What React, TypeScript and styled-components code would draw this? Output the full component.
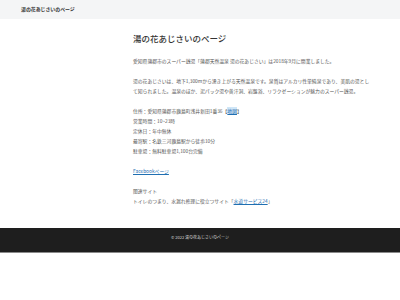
import React from "react";
import styled, { createGlobalStyle } from "styled-components";

const GlobalStyle = createGlobalStyle`
  html, body {
    margin: 0;
    padding: 0;
    background: #ffffff;
  }
  body {
    font-family: "Noto Sans CJK JP", "Noto Sans", sans-serif;
    color: #555555;
  }
`;

const Header = styled.header`
  height: 19px;
  background: #f4f5f6;
  display: flex;
  align-items: center;
  padding-left: 21px;
`;

const SiteTitle = styled.div`
  font-size: 4.9px;
  font-weight: 700;
  color: #333333;
  line-height: 1;
`;

const Main = styled.main`
  padding: 14px 0 22px 133px;
`;

const Content = styled.div`
  width: 238px;
`;

const PageTitle = styled.h1`
  margin: 0 0 13px;
  font-size: 8.5px;
  line-height: 10px;
  font-weight: 500;
  color: #333333;
`;

const Para = styled.p`
  margin: 0 0 10px;
  font-size: 4.8px;
  line-height: 10px;
  &:last-child {
    margin-bottom: 0;
  }
`;

const Link = styled.a<{ $highlight?: boolean }>`
  color: #1f6fb2;
  text-decoration: underline;
  background: ${(p) => (p.$highlight ? "#cfe6f7" : "transparent")};
`;

const Footer = styled.footer`
  height: 25px;
  background: #1e1e1e;
  border-bottom: 1px solid #8a8a8a;
  display: flex;
  justify-content: center;
  padding-top: 7px;
  box-sizing: border-box;
`;

const Copy = styled.div`
  font-size: 4px;
  line-height: 4px;
  color: #d8d8d8;
`;

export default function App() {
  return (
    <>
      <GlobalStyle />
      <Header>
        <SiteTitle>湯の花あじさいのページ</SiteTitle>
      </Header>
      <Main>
        <Content>
          <PageTitle>湯の花あじさいのページ</PageTitle>
          <Para>
            愛知県蒲郡市のスーパー銭湯「蒲郡天然温泉 湯の花あじさい」は2018年9月に開業しました。
          </Para>
          <Para>
            湯の花あじさいは、地下1,300mから湧き上がる天然温泉です。泉質はアルカリ性単純泉であり、美肌の湯として知られました。温泉のほか、泥パック湯や黄汗洞、岩盤浴、リラクゼーションが魅力のスーパー銭湯。
          </Para>
          <Para>
            住所：愛知県蒲郡市鹿島町浅井新田1番36【
            <Link href="#" $highlight>
              地図
            </Link>
            】
            <br />
            営業時間：10~23時
            <br />
            定休日：年中無休
            <br />
            最寄駅：名鉄三河鹿島駅から徒歩10分
            <br />
            駐車場：無料駐車場1,100台完備
          </Para>
          <Para>
            <Link href="#">Facebookページ</Link>
          </Para>
          <Para>
            関連サイト
            <br />
            トイレのつまり、水漏れ修理に役立つサイト「
            <Link href="#">水道サービス24</Link>」
          </Para>
        </Content>
      </Main>
      <Footer>
        <Copy>© 2022 湯の花あじさいのページ</Copy>
      </Footer>
    </>
  );
}
